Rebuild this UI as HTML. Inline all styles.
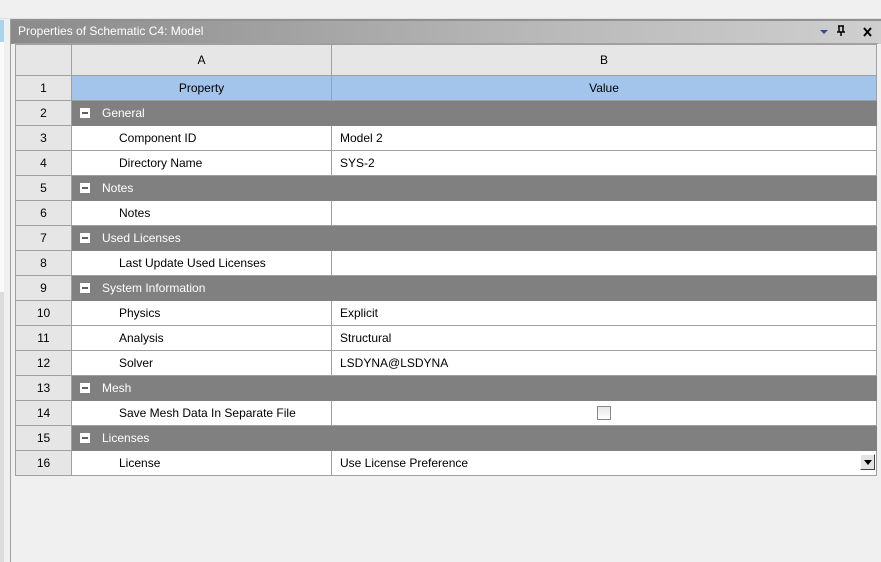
<!DOCTYPE html>
<html><head><style>
body{margin:0;width:881px;height:562px;background:#f0f0f0;position:relative;overflow:hidden;font-family:"Liberation Sans",sans-serif;font-size:12px;color:#000}
.a{position:absolute}
table{border-collapse:collapse;table-layout:fixed;position:absolute;left:15px;top:44px;width:862px;background:#fff}
td{border:1px solid #a0a0a0;height:24px;padding:0;white-space:nowrap;overflow:hidden;background:#fff}
td.n{background:#e6e6e6;text-align:center}
tr.h td{height:30px;background:#e6e6e6;text-align:center}
tr.p td.c{background:#a3c5ec;text-align:center}
tr.g td.c{background:#808080;color:#fff;border-color:#808080}
.box{display:inline-block;width:8px;height:8px;border:1px solid #fff;background:#fff;position:relative;vertical-align:-1px;margin:0 12px 0 8px}
.box:after{content:"";position:absolute;left:1px;top:3px;width:6px;height:2px;background:#606060}
td.k{padding-left:47px}
td.v{padding-left:8px}
</style></head><body>
<div class="a" style="left:0;top:0;width:881px;height:18px;background:#f0f0f0;border-bottom:1px solid #e0e0e0"></div>
<div class="a" style="left:0;top:20px;width:4px;height:22px;background:#a8d4ec"></div>
<div class="a" style="left:0;top:42px;width:4px;height:250px;background:#fafafa"></div>
<div class="a" style="left:0;top:292px;width:4px;height:270px;background:#dcdcdc"></div>
<div class="a" style="left:10px;top:19px;width:1px;height:543px;background:#a0a0a0"></div>
<div class="a" style="left:11px;top:19px;width:870px;height:543px;background:#f0f0f0"></div>
<div class="a" style="left:11px;top:19px;width:870px;height:25px;background:linear-gradient(to right,#8a8a8a,#b8b8b8 60%,#cfcfcf);border-top:2px solid #909090;box-sizing:border-box"></div>
<div class="a" style="left:18px;top:24px;color:#fff;font-size:12px">Properties of Schematic C4: Model</div>
<div class="a" style="left:820px;top:30px;width:0;height:0;border-left:4px solid transparent;border-right:4px solid transparent;border-top:4px solid #3a4a9a"></div>
<svg class="a" style="left:836px;top:25px" width="10" height="12"><path d="M2 1h6M3 1v6M7 1v6M1 7h8M5 7v4" stroke="#000" stroke-width="1.5" fill="none"/></svg>
<svg class="a" style="left:863px;top:27px" width="10" height="10"><path d="M1 1l7 8M8 1l-7 8" stroke="#000" stroke-width="2"/></svg>
<div class="a" style="left:14px;top:43px;width:864px;height:1px;background:#a0a0a0"></div>
<table>
<colgroup><col style="width:56px"><col style="width:260px"><col></colgroup>
<tr class="h"><td></td><td>A</td><td>B</td></tr>
<tr class="p"><td class="n">1</td><td class="c">Property</td><td class="c">Value</td></tr>
<tr class="g"><td class="n">2</td><td class="c" colspan="2"><span class="box"></span>General</td></tr>
<tr><td class="n">3</td><td class="k">Component ID</td><td class="v">Model 2</td></tr>
<tr><td class="n">4</td><td class="k">Directory Name</td><td class="v">SYS-2</td></tr>
<tr class="g"><td class="n">5</td><td class="c" colspan="2"><span class="box"></span>Notes</td></tr>
<tr><td class="n">6</td><td class="k">Notes</td><td class="v"></td></tr>
<tr class="g"><td class="n">7</td><td class="c" colspan="2"><span class="box"></span>Used Licenses</td></tr>
<tr><td class="n">8</td><td class="k">Last Update Used Licenses</td><td class="v"></td></tr>
<tr class="g"><td class="n">9</td><td class="c" colspan="2"><span class="box"></span>System Information</td></tr>
<tr><td class="n">10</td><td class="k">Physics</td><td class="v">Explicit</td></tr>
<tr><td class="n">11</td><td class="k">Analysis</td><td class="v">Structural</td></tr>
<tr><td class="n">12</td><td class="k">Solver</td><td class="v">LSDYNA@LSDYNA</td></tr>
<tr class="g"><td class="n">13</td><td class="c" colspan="2"><span class="box"></span>Mesh</td></tr>
<tr><td class="n">14</td><td class="k">Save Mesh Data In Separate File</td><td style="text-align:center"><span style="display:inline-block;width:12px;height:12px;border:1px solid #888;background:linear-gradient(#e8e8e8,#fff);vertical-align:middle"></span></td></tr>
<tr class="g"><td class="n">15</td><td class="c" colspan="2"><span class="box"></span>Licenses</td></tr>
<tr><td class="n">16</td><td class="k">License</td><td class="v" style="position:relative">Use License Preference<span style="position:absolute;right:1px;top:3px;width:15px;height:16px;background:#e4e4e4;border:1px solid #fff;border-right-color:#404040;border-bottom-color:#404040;box-sizing:border-box"><span style="position:absolute;left:3px;top:5px;border-left:4px solid transparent;border-right:4px solid transparent;border-top:5px solid #000"></span></span></td></tr>
</table>
</body></html>
